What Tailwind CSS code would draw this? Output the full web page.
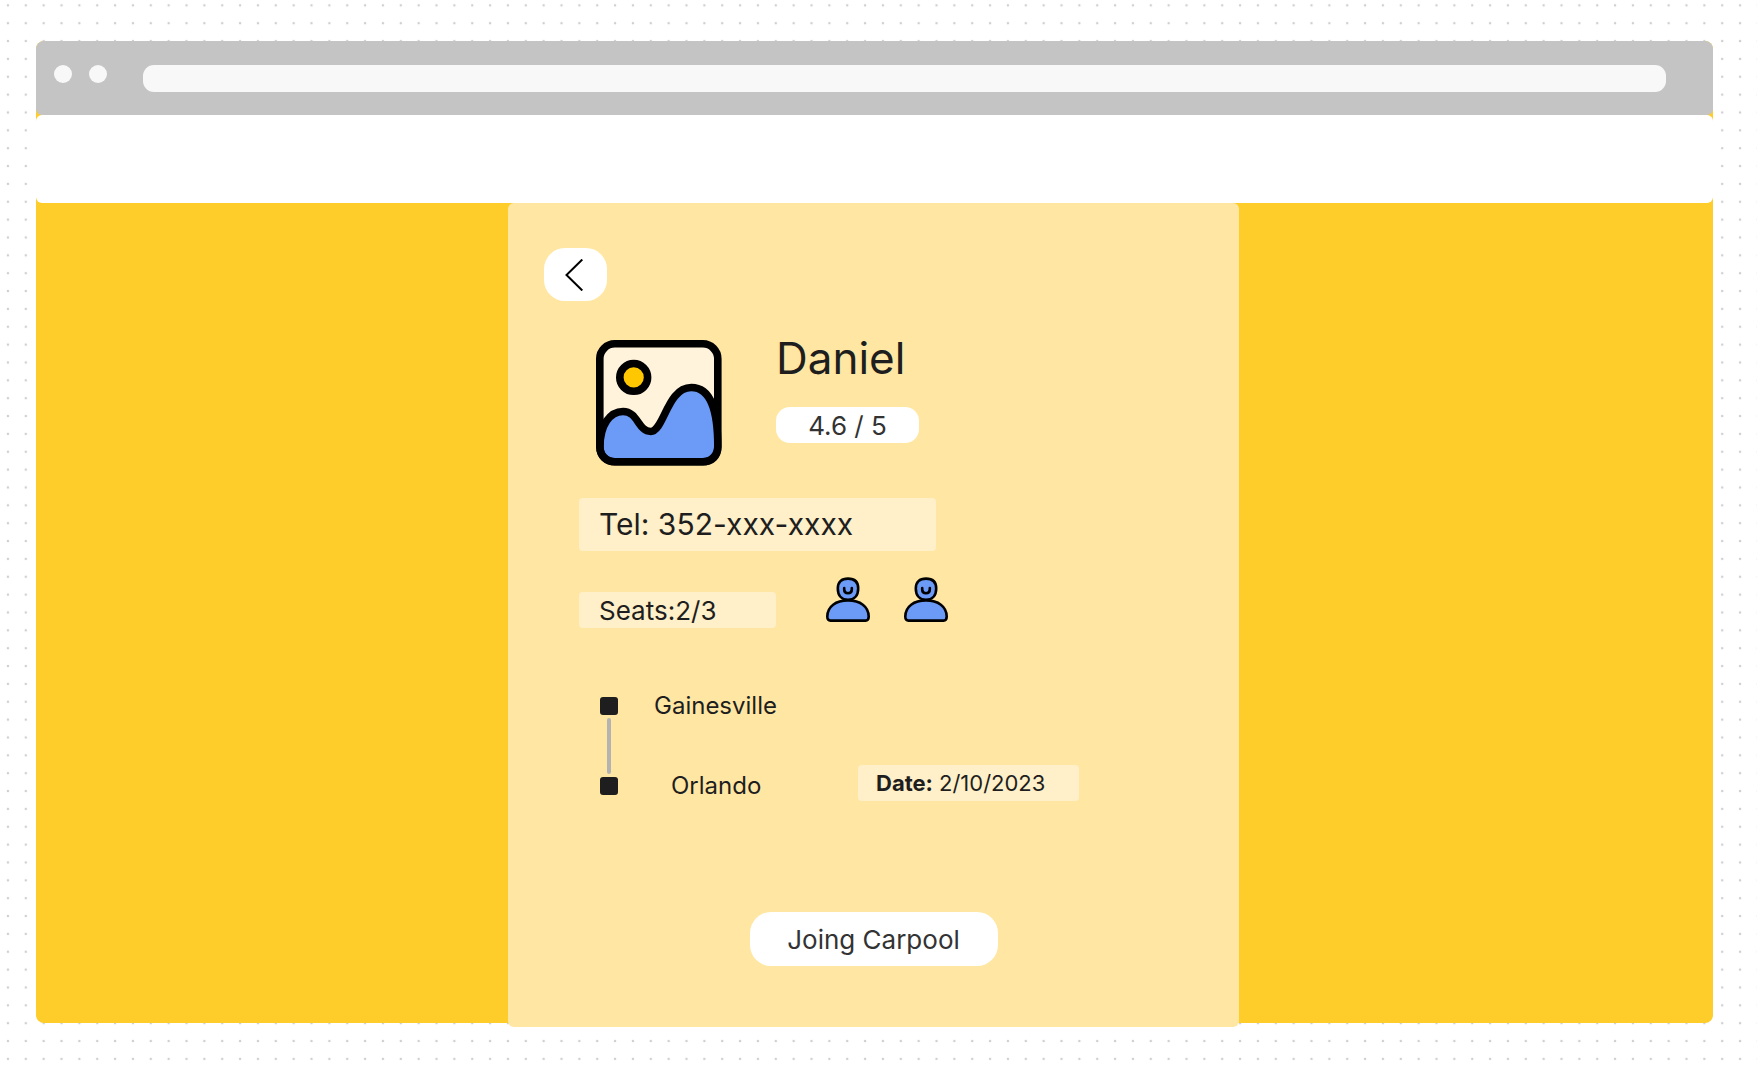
<!DOCTYPE html>
<html lang="en">
<head>
<meta charset="utf-8">
<meta name="viewport" content="width=device-width, initial-scale=1">
<title>Carpool details</title>
<script src="https://cdn.jsdelivr.net/npm/@tailwindcss/browser@4"></script>
</head>
<body class="relative min-h-screen bg-white font-['Inter',sans-serif] text-[#1e1e1e]">
<!-- Dotted canvas -->
<svg class="absolute inset-0 -z-10 h-full w-full" aria-hidden="true">
  <defs><pattern id="dots" x="-1" y="-3.6" width="17.857" height="17.857" patternUnits="userSpaceOnUse"><circle cx="8.95" cy="8.95" r="1.25" fill="#cfcfcf"/></pattern></defs>
  <rect width="100%" height="100%" fill="url(#dots)"/>
</svg>

<div class="pt-[41px] pr-11 pb-[47px] pl-9">
  <div class="rounded-lg bg-[#ffcd29]">
    <!-- Browser bar -->
    <div class="flex h-[74px] items-start rounded-t-lg rounded-b-md bg-[#c4c4c4] pt-6 pr-[47px] pl-[18px]">
      <span class="size-[18px] rounded-full bg-[#f8f8f8]"></span>
      <span class="ml-[17px] size-[18px] rounded-full bg-[#f8f8f8]"></span>
      <input type="text" aria-label="Address" class="ml-9 h-[27px] min-w-0 flex-1 rounded-[11px] bg-[#f8f8f8] px-3 outline-none">
    </div>
    <header class="h-[88px] rounded-md bg-white"></header>

    <main class="flex justify-center pr-0.5">
      <section class="-mb-1 w-[731px] rounded-md bg-[#ffe7a3] pt-[45px] pb-[61px]">
        <button type="button" aria-label="Back" class="ml-9 flex h-[53px] w-[63px] items-center justify-center rounded-[21px] bg-white pr-1">
          <svg class="h-8 w-[18px]" viewBox="0 0 18 32" fill="none" stroke="#000" stroke-width="2"><path d="M17.300 .5 1.500 16 17.300 31.500"/></svg>
        </button>

        <div class="mt-[39px] ml-[88px] flex gap-[54px]">
          <svg class="size-[126px] shrink-0" viewBox="0 0 126 126" role="img" aria-label="Profile picture">
            <rect x="3.8" y="3.8" width="118" height="118" rx="15" fill="#fff3dc"/>
            <path d="M4 107C4 85 14 71.4 27 71.4C42 71.4 42 91.4 54.7 91.4C68 91.4 71 47.5 95.3 47.5C115 47.5 121.8 70 121.8 107C121.8 116 116 121.8 107 121.8H19C10 121.8 4 116 4 107Z" fill="#6b9bf7" stroke="#000" stroke-width="7.5"/>
            <rect x="3.8" y="3.8" width="118" height="118" rx="15" fill="none" stroke="#000" stroke-width="7.6"/>
            <circle cx="37.7" cy="37.4" r="13.9" fill="#ffc700" stroke="#000" stroke-width="7.6"/>
          </svg>
          <div>
            <h1 class="text-[44px] leading-9">Daniel</h1>
            <p class="mt-[31px] flex h-9 w-[143px] items-center justify-center rounded-[14px] bg-white text-[26px] text-[#333]">4.6 / 5</p>
          </div>
        </div>

        <p class="mt-8 ml-[71px] flex h-[53px] w-[357px] items-center rounded bg-[#fff0c9] pl-5 text-[30px]">Tel: 352-xxx-xxxx</p>

        <div class="mt-[26px] ml-[71px] flex h-[51px] items-start">
          <p class="flex h-9 w-[197px] items-center self-end rounded bg-[#fff0c9] pl-5 text-[26px]">Seats:2/3</p>
          <svg class="ml-[50px] h-[45px] w-11" viewBox="0 0 44 45" fill="#6b9bf7" stroke="#000" stroke-width="2.6" stroke-linecap="round" stroke-linejoin="round" role="img" aria-label="Seat taken">
            <path d="M22 1.600C28.500 1.600 32.200 5 32.200 11.400C32.200 18.500 28.500 22.800 22 22.800C15.500 22.800 11.800 18.500 11.800 11.400C11.800 5 15.500 1.600 22 1.600Z"/>
            <path d="M22 23.400C34 23.400 42.700 29.500 42.700 39.500C42.700 42.500 41.500 43.600 39.500 43.600H4.500C2.500 43.600 1.300 42.500 1.300 39.500C1.300 29.500 10 23.400 22 23.400Z"/>
            <path d="M18.200 11V12.500C18.200 14.900 19.600 16.200 22 16.200S25.800 14.900 25.800 12.500V11" fill="none"/>
          </svg>
          <svg class="ml-[34px] h-[45px] w-11" viewBox="0 0 44 45" fill="#6b9bf7" stroke="#000" stroke-width="2.6" stroke-linecap="round" stroke-linejoin="round" role="img" aria-label="Seat taken">
            <path d="M22 1.600C28.500 1.600 32.200 5 32.200 11.400C32.200 18.500 28.500 22.800 22 22.800C15.500 22.800 11.800 18.500 11.800 11.400C11.800 5 15.500 1.600 22 1.600Z"/>
            <path d="M22 23.400C34 23.400 42.700 29.500 42.700 39.500C42.700 42.500 41.500 43.600 39.500 43.600H4.500C2.500 43.600 1.300 42.500 1.300 39.500C1.300 29.500 10 23.400 22 23.400Z"/>
            <path d="M18.200 11V12.500C18.200 14.900 19.600 16.200 22 16.200S25.800 14.900 25.800 12.500V11" fill="none"/>
          </svg>
        </div>

        <div class="mt-[69px] ml-[92px] flex h-[104px]">
          <ol class="w-[258px] text-[24px] leading-[18px]">
            <li class="flex items-center"><span class="size-[18px] rounded-[3px] bg-[#1e1e1e]"></span><span class="ml-9">Gainesville</span></li>
            <li class="my-[3px] ml-[7px] h-14 w-1 rounded-full bg-[#b3b3b3]" aria-hidden="true"></li>
            <li class="flex items-center"><span class="size-[18px] rounded-[3px] bg-[#1e1e1e]"></span><span class="ml-[53px]">Orlando</span></li>
          </ol>
          <p class="flex h-9 w-[221px] items-center gap-1.5 self-end rounded bg-[#fff0c9] pl-[18px] text-[22px]"><b>Date:</b> 2/10/2023</p>
        </div>

        <button type="button" class="mx-auto mt-[111px] block h-[54px] w-[248px] rounded-[21px] bg-white text-[26px] text-[#333]">Joing Carpool</button>
      </section>
    </main>
  </div>
</div>
</body>
</html>
